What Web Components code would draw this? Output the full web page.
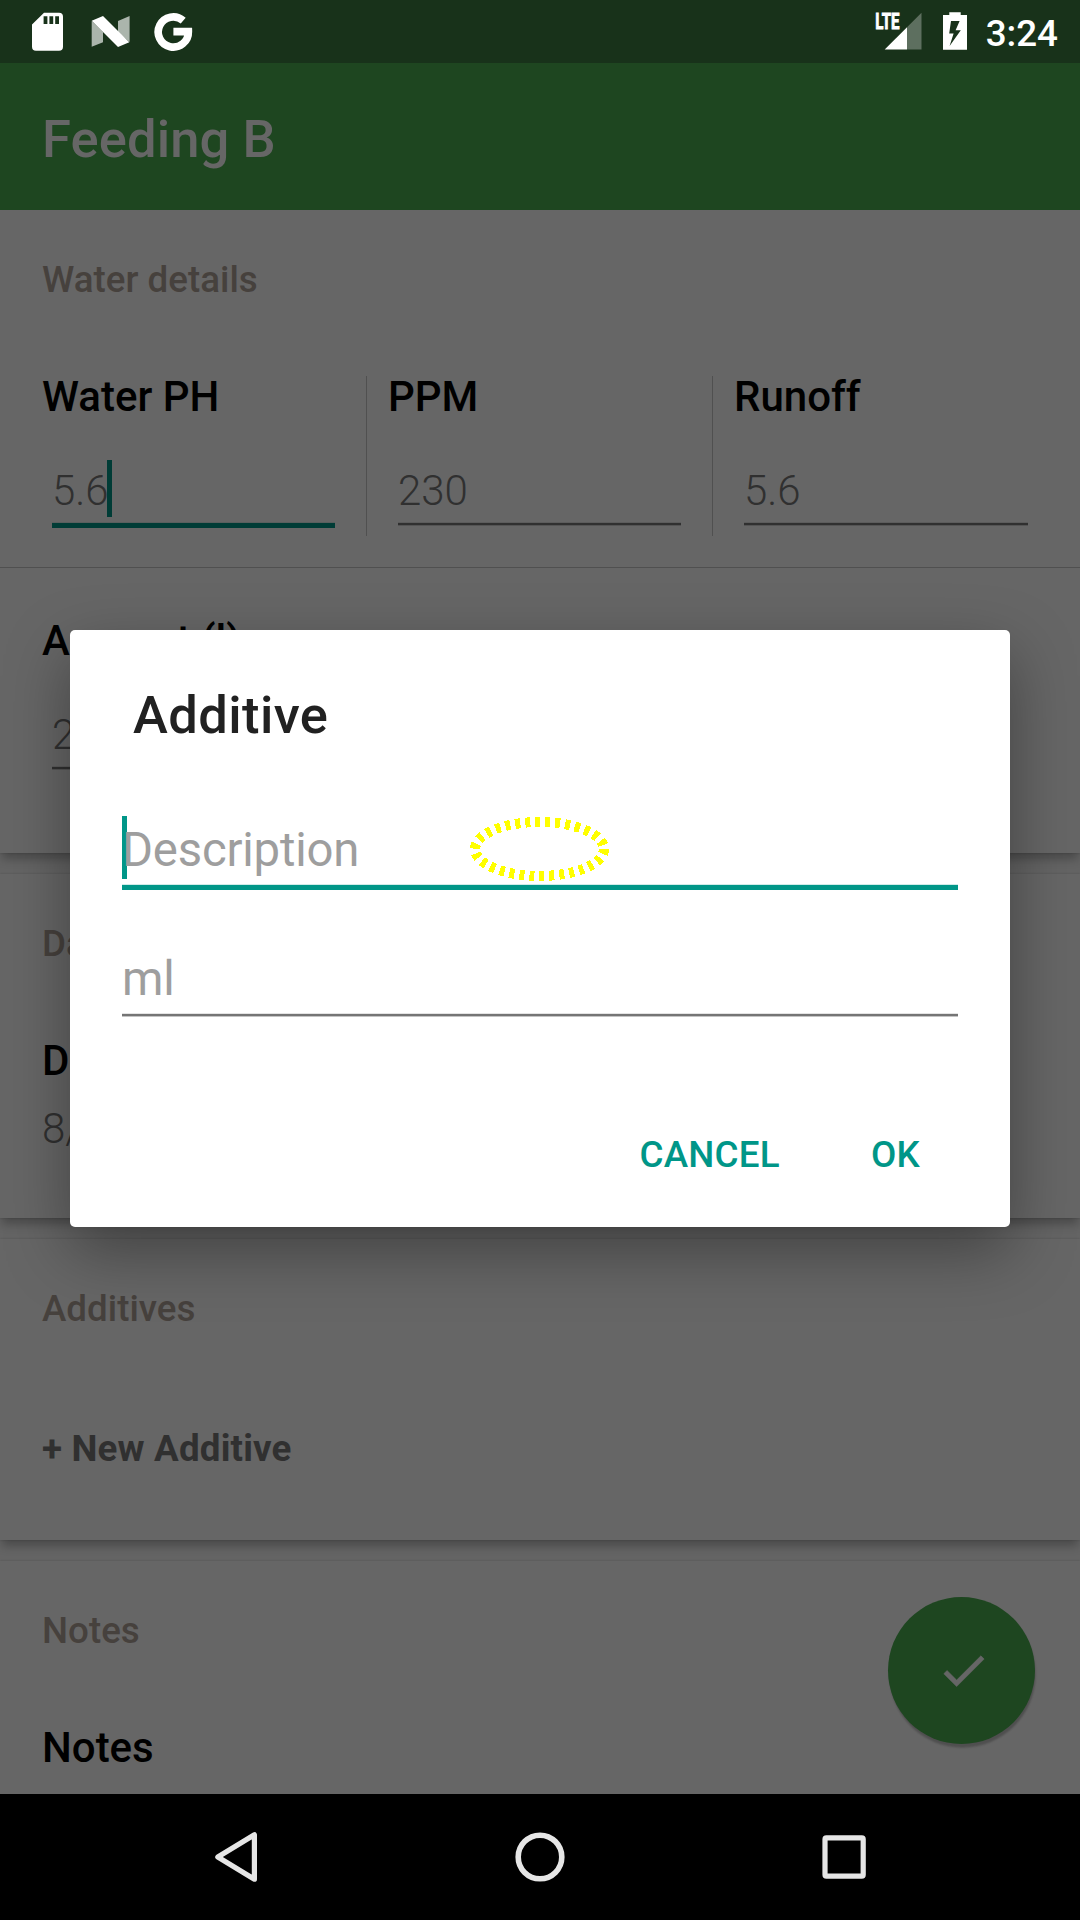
<!DOCTYPE html>
<html lang="en">
<head>
<meta charset="utf-8">
<title>Feeding B</title>
<style>
html,body{margin:0;padding:0;background:#000}
body{font-family:Roboto,"Liberation Sans",sans-serif;width:1080px;height:1920px;overflow:hidden}
</style>
</head>
<body>
<feeding-screen></feeding-screen>
<script>
const define = (name, html) => {
  const t = document.createElement('template');
  t.innerHTML = html;
  customElements.define(name, class extends HTMLElement {
    constructor() {
      super();
      this.attachShadow({ mode: 'open' }).append(t.content.cloneNode(true));
    }
  });
};

define('status-bar', `
<style>
:host{display:flex;height:63px;background:#18321a;color:#fff;justify-content:space-between;flex:none}
svg{display:block}
.side{display:flex;height:63px}
.time{font-weight:500;font-size:36.75px;line-height:43px;padding-top:12px;margin:0 22px 0 6px;white-space:pre}
</style>
<div class="side">
<svg width="210" height="63" viewBox="0 0 210 63">
  <path fill="#fff" fill-rule="evenodd" d="M44 12.7H59Q63 12.7 63 16.7V46.8Q63 50.8 59 50.8H36Q32 50.8 32 46.8V24.5ZM43.6 16.3V24H47.4V16.3ZM49.4 16.3V24H53.2V16.3ZM55.2 16.3V24H59V16.3Z"/>
  <path fill="#fff" fill-opacity=".64" d="M91.7 21V46.7L103 42.2V32Z M129.6 16V42L118 32V21Z"/>
  <path fill="#fff" d="M91.7 20.8L103 16L129.3 42.3L118 47Z"/>
  <path fill="none" stroke="#fff" stroke-width="7.6" d="M183.2 20.6A15.1 15.1 0 1 0 188.4 31.6H173.4"/>
</svg>
</div>
<div class="side">
<svg width="110" height="63" viewBox="870 0 110 63">
  <text x="0" y="0" transform="translate(875.2 29) scale(.67 1)" font-family="Roboto" font-weight="700" font-size="22.5" fill="#fff" stroke="#fff" stroke-width=".9">LTE</text>
  <path fill="#fff" d="M884.7 49.5L907 27.2V49.5Z"/>
  <path fill="#fff" fill-opacity=".3" d="M907 27.2L921.5 12.7V49.5H907Z"/>
  <path fill="#fff" fill-rule="evenodd" d="M949.3 12.3H960.7V15H967V49.8H943V15H949.3ZM951 21L949.2 33.4H953.6L949.6 46L960.8 30.2H955.6L959.6 21Z"/>
</svg>
<div class="time">3:24</div>
</div>`);

define('app-bar', `
<style>
:host{display:block;height:147px;box-sizing:border-box;padding:45px 42px 0;background:#1e4620;color:#666;font-weight:500;font-size:52.5px;line-height:62px;letter-spacing:.12px;flex:none}
</style><slot></slot>`);

define('detail-card', `
<style>
:host{display:flow-root;position:relative;background:#666;box-shadow:0 0 2px rgba(0,0,0,.18),0 8px 9px -2px rgba(0,0,0,.26)}
.heading{margin:48px 42px 0;font-weight:500;font-size:36.75px;line-height:43px;color:#46413d}
</style>
<div class="heading"><slot name="heading"></slot></div>
<slot></slot>`);

define('field-group', `
<style>
:host{display:block}
.label{font-weight:500;font-size:42px;line-height:49px;color:#000}
</style>
<div class="label"><slot name="label"></slot></div>
<slot></slot>`);

define('text-input', `
<style>
:host{display:block;position:relative;font-size:42px;line-height:49px;font-weight:300;color:#303030;margin:45px 10px 0}
.line{margin-top:7px;height:4px;background:linear-gradient(#5c5c5c 1px,#303030 1px,#303030 3px,#545454 3px)}
:host([focused]) .line{height:6px;background:linear-gradient(#595f5e 1px,#003c36 1px)}
.cursor{display:none;position:absolute;width:5px;height:57px;top:-6px;left:55px;background:#003c36}
:host([focused]) .cursor{display:block}
:host([large]){font-size:47.25px;line-height:56px;font-weight:400;color:#9e9e9e;letter-spacing:-.18px;margin:0 52px}
:host([large]) .line{margin-top:6px;background:linear-gradient(#e4e4e4 1px,#757575 1px,#757575 3px,#c4c4c4 3px)}
:host([large][focused]) .line{background:linear-gradient(#d0ebe8 1px,#009688 1px)}
:host([large]) .cursor{left:0;height:63px;background:#009688}
.text{position:relative}
</style>
<div class="cursor"></div>
<div class="text"><slot></slot></div>
<div class="line"></div>`);

define('round-action', `
<style>
:host{display:flex;align-items:center;justify-content:center;width:147px;height:147px;border-radius:50%;background:#1e4620;box-shadow:1px 5px 2px -1px rgba(0,0,0,.14),1px 3px 2px rgba(0,0,0,.1)}
svg{display:block;margin:0 0 0 3px}
</style>
<svg width="55" height="55" viewBox="0 0 24 24"><path fill="#666" stroke="#666" stroke-width=".25" d="M9 16.17L4.83 12l-1.42 1.41L9 19 21 7l-1.41-1.41z"/></svg>`);

define('nav-bar', `
<style>
:host{display:flex;height:126px;background:#000;flex:none}
svg{display:block}
</style>
<svg width="1080" height="126" viewBox="0 1794 1080 126" fill="none" stroke="#e6e6e6">
  <path stroke-width="5.2" stroke-linejoin="round" d="M217.8 1857L254.4 1834.8V1879.2Z"/>
  <circle cx="540" cy="1857" r="21.8" stroke-width="5.6"/>
  <rect x="825" y="1837.8" width="38.2" height="38.4" rx="1.4" stroke-width="5.2"/>
</svg>`);

define('additive-dialog', `
<style>
:host{display:flow-root;width:940px;height:597px;background:#fff;border-radius:5px;box-shadow:0 24px 64px rgba(0,0,0,.36)}
.title{margin:54px 63px 76px;font-weight:500;font-size:52.5px;line-height:62px;letter-spacing:.42px;color:#212121}
.second{margin-top:61px}
.actions{display:flex;justify-content:flex-end;gap:91px;margin-top:116px;padding-right:90px;font-weight:500;font-size:36.75px;line-height:43px;letter-spacing:.25px;color:#009688}
</style>
<div class="title">Additive</div>
<text-input large focused>Description</text-input>
<div class="second"><text-input large>ml</text-input></div>
<div class="actions"><span>CANCEL</span><span>OK</span></div>`);

define('feeding-screen', `
<style>
:host{display:flex;flex-direction:column;position:relative;width:1080px;height:1920px;overflow:hidden;background:#666}
main{flex:1;min-height:0;overflow:hidden;display:flex;flex-direction:column;gap:21px;background:#646464}
detail-card{flex:none}
.columns{display:grid;grid-template-columns:303px 303px 304px;column-gap:43px;margin:71px 42px 0;height:195px}
.columns field-group{position:relative}
.columns field-group+field-group::before{content:"";position:absolute;left:-22px;top:4px;width:1px;height:160px;background:#505050}
hr{border:0;height:1px;margin:0;background:#505050}
.one{margin:71px 42px 0;width:303px}
.value{font-size:42px;line-height:49px;font-weight:300;color:#303030;margin-top:19px}
.new{margin:97px 42px 70px;font-weight:700;font-size:36.75px;line-height:43px;letter-spacing:.17px;color:#303030}
.scrim{position:absolute;inset:63px 0 126px;display:flex;align-items:center;justify-content:center}
round-action{position:absolute;left:888px;top:1597px}
.highlight{position:absolute;left:465px;top:812px}
</style>
<status-bar></status-bar>
<app-bar>Feeding B</app-bar>
<main>
  <detail-card style="height:643px">
    <span slot="heading">Water details</span>
    <div class="columns">
      <field-group><span slot="label">Water PH</span><text-input focused>5.6</text-input></field-group>
      <field-group><span slot="label">PPM</span><text-input>230</text-input></field-group>
      <field-group><span slot="label">Runoff</span><text-input>5.6</text-input></field-group>
    </div>
    <hr>
    <div class="one" style="margin-top:48px"><field-group><span slot="label">Amount (l)</span><text-input>2</text-input></field-group></div>
  </detail-card>
  <detail-card style="height:344px">
    <span slot="heading">Date</span>
    <div class="one"><field-group><span slot="label">Date</span><div class="value">8/</div></field-group></div>
  </detail-card>
  <detail-card>
    <span slot="heading">Additives</span>
    <div class="new">+ New Additive</div>
  </detail-card>
  <detail-card style="height:300px">
    <span slot="heading">Notes</span>
    <div class="one"><field-group><span slot="label">Notes</span></field-group></div>
  </detail-card>
</main>
<nav-bar></nav-bar>
<round-action></round-action>
<div class="scrim"><additive-dialog></additive-dialog></div>
<svg class="highlight" width="150" height="75" viewBox="465 812 150 75" shape-rendering="crispEdges">
  <ellipse cx="539.5" cy="849" rx="64.5" ry="27" fill="none" stroke="#ff0" stroke-width="10" stroke-dasharray="5 5"/>
</svg>`);
</script>
</body>
</html>
